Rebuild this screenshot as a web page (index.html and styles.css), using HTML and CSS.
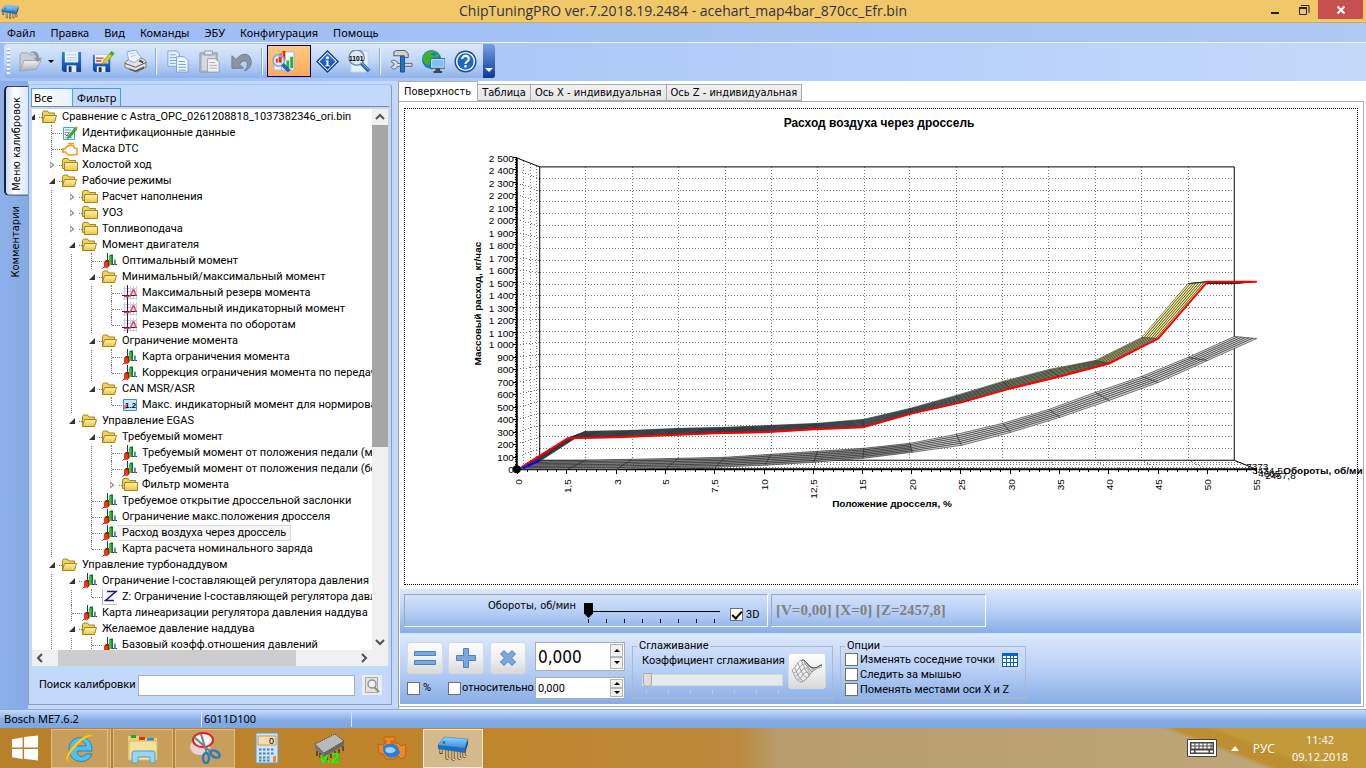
FILE: index.html
```
<!DOCTYPE html>
<html lang="ru">
<head>
    <meta charset="UTF-8">
    <meta name="viewport" content="width=device-width, initial-scale=1.0">
    <title>ChipTuningPRO</title>
    <link rel="stylesheet" href="styles.css">
</head>
<body>
    <!-- icon set -->
    <svg class="defs" aria-hidden="true">
        <defs>
            <linearGradient id="gFolder" x1="0" y1="0" x2="0" y2="1"><stop offset="0" stop-color="#fff6b0"/><stop offset="1" stop-color="#f0c33c"/></linearGradient>
            <linearGradient id="gBlue" x1="0" y1="0" x2="0" y2="1"><stop offset="0" stop-color="#2f86e0"/><stop offset="1" stop-color="#0a3f9c"/></linearGradient>
            <linearGradient id="gChip" x1="0" y1="0" x2="0" y2="1"><stop offset="0" stop-color="#8fd0ff"/><stop offset="1" stop-color="#3a92dc"/></linearGradient>
            <linearGradient id="gGray" x1="0" y1="0" x2="0" y2="1"><stop offset="0" stop-color="#f2f3f6"/><stop offset="1" stop-color="#a6adba"/></linearGradient>
        </defs>
        <symbol id="folder-open" viewBox="0 0 16 16">
            <path d="M.5 13V3.500l1-1.500h4l1.500 2h5.500v3" fill="#f3d25a" stroke="#a8821c"/>
            <path d="M.5 13.500L2.500 6.500h12l-2 7z" fill="url(#gFolder)" stroke="#a8821c"/>
        </symbol>
        <symbol id="folder" viewBox="0 0 16 16">
            <path d="M.5 11.500V3l1-1.500h4.500l1.500 2h6v8z" fill="#f3d25a" stroke="#a8821c"/>
            <path d="M2.500 5.500h13v8h-13z" fill="url(#gFolder)" stroke="#a8821c"/>
        </symbol>
        <symbol id="map3d" viewBox="0 0 16 16">
            <path d="M5.500 0v11L.5 15.500M5.500 11.500H15" stroke="#2b2f6e" fill="none"/>
            <path d="M2 9l2-2h4v5l-2 2.500H2z" fill="#b01208"/><path d="M2 9h4v5.500H2z" fill="#f0331c"/>
            <path d="M7 3l1.500-1.500H11V12H7z" fill="#0b7d1c"/><path d="M7 3h2.500v9H7z" fill="#35c83e"/>
            <path d="M12 6.500h1.800V12H12z" fill="#6a6fd0"/>
        </symbol>
        <symbol id="curve" viewBox="0 0 16 16">
            <path d="M2.500 1v14M8.500 1v14M11.500 1v14M14.500 1v14M1 3.500h14M1 6.500h14M1 13.500h14" stroke="#c9cbf5" fill="none"/>
            <path d="M5.500 0v16M0 10.500h15" stroke="#1c2060" fill="none"/>
            <path d="M2 11.500h5l2-1.500 2-5h1l2 6" stroke="#e8402c" fill="none" stroke-width="1.300"/>
        </symbol>
        <symbol id="doc-edit" viewBox="0 0 16 16">
            <path d="M1.500 2.500h11v12h-11z" fill="#e3f2ff" stroke="#4aa3e0"/>
            <path d="M3 5h6M3 7.500h5M3 12.500h7" stroke="#58aee8"/><path d="M3 9l2 2 2-3" stroke="#d83020" fill="none"/>
            <path d="M6 11.500L13 2.500l2 1.500-7 8.500-2.500 1z" fill="#39b52c" stroke="#1c7a18" stroke-width=".6"/><path d="M13 2.500l1-1.500 2 1.500-1 1.500z" fill="#e8a030"/>
        </symbol>
        <symbol id="engine" viewBox="0 0 16 16">
            <path d="M4.500 5.500h2V4.500h5v1l1.500 2h2v6h-2l-2 .500H6l-2.500-3H1v-3h2z" fill="none" stroke="#f2a01e" stroke-width="1.600"/>
            <path d="M6 2.500h6M9 2.500v2M1 7v5" stroke="#f2a01e" stroke-width="1.600"/>
        </symbol>
        <symbol id="num" viewBox="0 0 16 16">
            <path d="M1.500 2.500h13v11h-13z" fill="#c9e6fb" stroke="#3e8ed0"/>
            <path d="M2 9h3M2 11h3" stroke="#e02c20"/><text x="3" y="11" class="num-text">1.2</text>
        </symbol>
        <symbol id="zaxis" viewBox="0 0 16 16">
            <path d="M.5 0v15.500H15" stroke="#b9bcc8" fill="none"/>
            <path d="M5 2.500h9L3.500 11.500H12" stroke="#14149a" stroke-width="1.500" fill="none"/>
        </symbol>
        <symbol id="chip" viewBox="0 0 32 26">
            <path d="M4 12v7M10 15v8l2 1M16 16v8l2 1M22 16v7l2 1M27 14v7l2 1" stroke="#4c3a20" stroke-width="3" fill="none"/>
            <path d="M4 12v6M10 15v8l2 1M16 16v8l2 1M22 16v7l2 1M27 14v7l2 1" stroke="#ecd09a" stroke-width="1.500" fill="none"/>
            <path d="M1 10L7 2l24 2-3 9z" fill="url(#gChip)" stroke="#2878c0" stroke-width=".5"/><path d="M1 10l27 3v5L1 14z" fill="#1f70bc"/><path d="M28 13l3-9v5l-3 9z" fill="#154c86"/>
            <circle cx="7" cy="7.500" r="1.500" fill="#2470b4"/>
        </symbol>
        <symbol id="open" viewBox="0 0 24 24">
            <path d="M1 22V5l2-2h6l2 2h7v5" fill="#c9ced8" stroke="#9aa2b0"/><path d="M1 22l4-11h18l-5 9z" fill="url(#gGray)" stroke="#9aa2b0"/>
            <path d="M10 4c5-2 8 0 8 4h-3l5 5 4-5h-3c0-6-6-9-11-4z" fill="#8f97a5"/>
        </symbol>
        <symbol id="save" viewBox="0 0 24 24">
            <path d="M2 2h20v21H4l-2-2z" fill="url(#gBlue)"/><path d="M5 2h14v11H5z" fill="#eaf3fd"/>
            <path d="M7 5h10M7 8h10M7 10.500h10" stroke="#b7cce8"/><path d="M7 16h10v7H7z" fill="#e9edf3"/><path d="M9 17h3v6H9z" fill="#15336e"/>
        </symbol>
        <symbol id="save-edit" viewBox="0 0 24 24">
            <path d="M1 5h18v18H3l-2-2z" fill="url(#gBlue)"/><path d="M3 5h14v9H3z" fill="#f3f7fd"/>
            <path d="M4 8.500h8M4 11.500h6" stroke="#e03a28" stroke-width="1.500"/><path d="M5 17h9v6H5z" fill="#e9edf3"/><path d="M7 18h3v5H7z" fill="#15336e"/>
            <path d="M11 15l1-4 8-9 3 2-8 9z" fill="#f4c21e" stroke="#7a8a18" stroke-width=".7"/><path d="M18 4l3 2.500 2.500-3L20.500 1z" fill="#39b52c"/>
        </symbol>
        <symbol id="print" viewBox="0 0 24 24">
            <path d="M1 13l5-4h14l3 3v6l-10 5L1 18z" fill="#e2e2e2" stroke="#777"/>
            <path d="M5 11L3 2l9-2 6 8-7 5z" fill="#eef5ff" stroke="#7fa6e0"/><path d="M6 4l5-1M7 7l6-2" stroke="#a8c8f0"/>
            <path d="M1 14l11 4 11-5" stroke="#555" fill="none"/><path d="M5 19l7 2 9-4v2l-9 4-7-3z" fill="#555"/><path d="M16 11l4 2" stroke="#444" stroke-width="2"/>
        </symbol>
        <symbol id="copy" viewBox="0 0 24 24">
            <path d="M2 1h9l3 3v13H2z" fill="#e9f1fc" stroke="#7ba0d8"/><path d="M4 5h6M4 8h8M4 11h8M4 14h6" stroke="#7ba0d8"/>
            <path d="M11 7h8l4 4v12H11z" fill="#f4f8fe" stroke="#7ba0d8"/><path d="M13 12h7M13 15h8M13 18h8M13 21h8" stroke="#6f98d6"/>
        </symbol>
        <symbol id="paste" viewBox="0 0 24 24">
            <path d="M2 3h18v20H2z" fill="#b7bcc6" stroke="#9097a4"/><path d="M4 6h14v15H4z" fill="#d5d9e0"/><path d="M7 1h8v4H7z" fill="#e8eaee" stroke="#9097a4"/>
            <path d="M10 9h8l4 4v10H10z" fill="#f0f2f5" stroke="#9aa1ad"/><path d="M12 13h6M12 16h8M12 19h8" stroke="#a9afba"/>
        </symbol>
        <symbol id="undo" viewBox="0 0 24 24">
            <path d="M2 6v13h12l-4-4c4-6 9-4 8 2-.5 2-2 4-3 5 5-2 8-6 7-11C21 3 12 2 6.500 10z" fill="#8b94a3" stroke="#737c8b"/>
        </symbol>
        <symbol id="compare" viewBox="0 0 24 24">
            <path d="M2 5h13v16H2z" fill="#edf5ff" stroke="#8fb8e8"/><path d="M10 2h13v19H10z" fill="#f5faff" stroke="#8fb8e8"/>
            <path d="M7 4h3v9H7zM11 1h3v10h-3z" fill="#e2321e"/><path d="M15 11h3v8h-3zM19 7h3v12h-3z" fill="#27b339"/>
            <circle cx="7" cy="11" r="6" fill="#d5e9fb" fill-opacity=".7" stroke="#8aa4c0" stroke-width="1.500"/><path d="M4 13V9h2v4zM7 13V7h3v6z" fill="#e2321e"/><path d="M11 15l7 7" stroke="#2468c0" stroke-width="4"/>
        </symbol>
        <symbol id="info" viewBox="0 0 24 24">
            <path d="M12 0l12 12-12 12L0 12z" fill="#123c80"/><path d="M12 2l10 10-10 10L2 12z" fill="#fff"/><path d="M12 3.500l8.500 8.500-8.500 8.500L3.500 12z" fill="url(#gBlue)"/>
            <circle cx="12" cy="8" r="1.600" fill="#fff"/><path d="M10 11h3v5h1.500v1h-5v-1H11v-4h-1z" fill="#fff"/>
        </symbol>
        <symbol id="bits" viewBox="0 0 24 24">
            <path d="M3 1h18v22H3z" fill="#e6f1fd" stroke="#b8d0ee"/><circle cx="9" cy="8" r="8" fill="#dcebf9" stroke="#7d8999" stroke-width="1.500"/>
            <text x="1" y="11" class="bits-text">1101</text><path d="M14 14l8 8" stroke="#2468c0" stroke-width="4"/><path d="M14 13l8 8" stroke="#7db4ee"/>
        </symbol>
        <symbol id="tools" viewBox="0 0 24 24">
            <path d="M1 12l3 2v2l-3 2c2 3 6 2 7-1h15v-3H8c-1-4-5-4-7-2z" fill="#d8dbe0" stroke="#666"/>
            <path d="M11 6h4v17h-4z" fill="#2c74c8" stroke="#174a8c"/><path d="M4 2l3-1.500h9L19 4v4h-3l-1-2H9L4 6z" fill="#d0d4da" stroke="#555"/>
        </symbol>
        <symbol id="globe" viewBox="0 0 24 24">
            <circle cx="10" cy="10" r="10" fill="#1b78d0"/><path d="M3 4c4-4 11-5 15 1l-2 3-4-1-1 5-4 4-4-2-3-5z" fill="#38b52c"/><path d="M9 5l3-3 4 2-3 2z" fill="#1b78d0"/>
            <path d="M9 9h15v10H9z" fill="#cfe6fb" stroke="#34597f"/><path d="M10.500 10.500h12v7h-12z" fill="#7cc0f5"/><path d="M14 19h5v3h2v2h-9v-2h2z" fill="#3c4658"/>
        </symbol>
        <symbol id="help" viewBox="0 0 24 24">
            <circle cx="12" cy="12" r="11.500" fill="#1a4fa0"/><circle cx="12" cy="12" r="10" fill="#fff"/><circle cx="12" cy="12" r="8.500" fill="#1f68c8"/>
            <path d="M8.500 9.500c0-4.500 7-4.500 7 0 0 2.500-3.500 2.500-3.500 5" stroke="#fff" stroke-width="2.200" fill="none"/><circle cx="12" cy="17" r="1.400" fill="#fff"/>
        </symbol>
        <symbol id="lens" viewBox="0 0 16 16">
            <path d="M1.500.5h12v15h-12z" fill="#e4e4e4" stroke="#aaa"/><circle cx="8" cy="7" r="4" fill="#f2f2f2" stroke="#909090" stroke-width="1.500"/><path d="M10.500 10.500l4.500 4.500" stroke="#909090" stroke-width="2.200"/>
        </symbol>
        <symbol id="ie" viewBox="0 0 32 32">
            <path d="M28 19H13c0 6 7 7 9 3h6c-3 11-23 10-23-5C5 2 29 0 28 19zM13 14h9c-1-6-8-6-9 0z" fill="#4fc0f2" stroke="#1577b8" stroke-width=".8"/>
            <path d="M30 5c-2-6-14 0-21 9C1 23 0 31 6 30c-4-1-1-8 5-14C18 8 25 3 30 5z" fill="#f8cc2c" stroke="#d59a10" stroke-width=".6"/>
        </symbol>
        <symbol id="explorer" viewBox="0 0 32 32">
            <path d="M1 4h10l2 2h17v22H1z" fill="#efcf78"/><path d="M4 3h5v3H4z" fill="#18a838"/><path d="M12 5h6v3h-6z" fill="#d03828"/><path d="M20 6h7v3h-7z" fill="#2f8ee0"/>
            <path d="M2 9h28v19H2z" fill="#f6e29c" stroke="#dcb860"/><path d="M5 31V21q0-2 2-2h19q2 0 2 2v10h-5v-6H11v6z" fill="#9bd3f2" stroke="#4ba0d0"/>
        </symbol>
        <symbol id="scissors" viewBox="0 0 32 32">
            <ellipse cx="11" cy="15" rx="10" ry="8" fill="#ead4d0"/><ellipse cx="14" cy="8" rx="10" ry="7" fill="#f4f4f4" stroke="#e0202c" stroke-width="2"/>
            <path d="M5 5l18 16M12 2l6 20" stroke="#777f8a" stroke-width="2"/>
            <ellipse cx="17" cy="26" rx="3" ry="5" fill="none" stroke="#2a7cc0" stroke-width="2.500"/><ellipse cx="26" cy="22" rx="5" ry="3" fill="none" stroke="#2a7cc0" stroke-width="2.500" transform="rotate(30 26 22)"/>
        </symbol>
        <symbol id="calc" viewBox="0 0 24 32">
            <path d="M1 1h22v30H1z" fill="#cfe4f4" stroke="#5b9cc8"/><path d="M3 4h18v9H3z" fill="#f4dcae" stroke="#c79c5a"/><text x="14" y="12" class="calc-text">0</text>
            <path d="M4 17.500h16M4 21.500h16M4 25.500h12M4 28.500h12" stroke="#4f83b4" stroke-width="2.200" stroke-dasharray="2.500 1.500"/><path d="M18 24h3v6h-3z" fill="#f08a28"/>
        </symbol>
        <symbol id="chip-gray" viewBox="0 0 32 32">
            <path d="M2 12L22 2l9 7-20 12z" fill="#b9b9b9" stroke="#444" stroke-dasharray="1.500 1"/><path d="M2 12l9 9v4l-9-8z" fill="#777"/><path d="M11 21l20-12v4L11 25z" fill="#666"/>
            <path d="M4 19v5M7 21v5M14 24v4M18 22v4M22 19v4M26 17v4M30 14v5" stroke="#111"/><text x="7" y="31" class="ver-text">v.2</text>
        </symbol>
        <symbol id="turbo" viewBox="0 0 32 24">
            <path d="M9 1h11v4h-4v2h7l3 3 4-2 1 4-1 9-4 2-3-3-4 3H11l-3-5-4-1-1-9 4 1 4-2V5H9z" fill="#f08a1c" stroke="#c85a10"/>
            <path d="M8 10c5-3 12-3 15 1l2 6c-3 5-8 5-12 4-4-2-5-5-5-11z" fill="#2f7ce0"/><path d="M11 12c4-2 7-1 9 1s-2 4-5 4-6-2-4-5z" fill="#9cd0ff"/>
        </symbol>
    </svg>

    <header class="titlebar">
        <svg class="title-icon"><use href="#chip"/></svg>
        <h1>ChipTuningPRO ver.7.2018.19.2484 - acehart_map4bar_870cc_Efr.bin</h1>
        <div class="win-buttons">
            <button aria-label="Свернуть"><svg viewBox="0 0 12 12"><path d="M2 9h8" stroke="#222" stroke-width="2"/></svg></button>
            <button aria-label="Восстановить"><svg viewBox="0 0 12 12"><path d="M3 1.500h8V9M1.500 4h7v6.500h-7z" fill="none" stroke="#222"/><path d="M1 4h8" stroke="#222" stroke-width="2"/></svg></button>
            <button class="close" aria-label="Закрыть"><svg viewBox="0 0 12 12"><path d="M2.500 2.500l7 7M9.500 2.500l-7 7" stroke="#fff" stroke-width="2"/></svg></button>
        </div>
    </header>

    <nav class="menubar">
        <a href="#">Файл</a><a href="#">Правка</a><a href="#">Вид</a><a href="#">Команды</a><a href="#">ЭБУ</a><a href="#">Конфигурация</a><a href="#">Помощь</a>
    </nav>

    <div class="toolbar-row">
        <div class="toolbar">
            <span class="grip"></span>
            <button aria-label="Открыть"><svg><use href="#open"/></svg></button>
            <button class="drop" aria-label="Недавние файлы"><i></i></button>
            <button aria-label="Сохранить"><svg><use href="#save"/></svg></button>
            <button aria-label="Сохранить как"><svg><use href="#save-edit"/></svg></button>
            <button aria-label="Печать"><svg><use href="#print"/></svg></button>
            <span class="sep"></span>
            <button aria-label="Копировать"><svg><use href="#copy"/></svg></button>
            <button aria-label="Вставить"><svg><use href="#paste"/></svg></button>
            <button aria-label="Отменить"><svg><use href="#undo"/></svg></button>
            <span class="sep"></span>
            <button class="pressed" aria-label="Сравнение"><svg><use href="#compare"/></svg></button>
            <button aria-label="Информация"><svg><use href="#info"/></svg></button>
            <button aria-label="Просмотр данных"><svg><use href="#bits"/></svg></button>
            <span class="sep"></span>
            <button aria-label="Настройки"><svg><use href="#tools"/></svg></button>
            <button aria-label="Сеть"><svg><use href="#globe"/></svg></button>
            <button aria-label="Справка"><svg><use href="#help"/></svg></button>
            <button class="overflow" aria-label="Ещё"><i></i></button>
        </div>
    </div>

    <main class="workspace">
        <div class="side-tabs">
            <button class="active">Меню калибровок</button>
            <button>Комментарии</button>
        </div>

        <section class="nav-panel">
            <div class="nav-tabs">
                <button class="active">Все</button><button>Фильтр</button>
            </div>
            <div class="tree-box">
                <ul class="tree">
                    <li><div class="row"><button class="arrow open"></button><svg><use href="#folder-open"/></svg><span>Сравнение с Astra_OPC_0261208818_1037382346_ori.bin</span></div>
                        <ul class="more">
                            <li><div class="row"><svg><use href="#doc-edit"/></svg><span>Идентификационные данные</span></div></li>
                            <li><div class="row"><svg><use href="#engine"/></svg><span>Маска DTC</span></div></li>
                            <li><div class="row"><button class="arrow"></button><svg><use href="#folder"/></svg><span>Холостой ход</span></div></li>
                            <li><div class="row"><button class="arrow open"></button><svg><use href="#folder-open"/></svg><span>Рабочие режимы</span></div>
                                <ul>
                                    <li><div class="row"><button class="arrow"></button><svg><use href="#folder"/></svg><span>Расчет наполнения</span></div></li>
                                    <li><div class="row"><button class="arrow"></button><svg><use href="#folder"/></svg><span>УОЗ</span></div></li>
                                    <li><div class="row"><button class="arrow"></button><svg><use href="#folder"/></svg><span>Топливоподача</span></div></li>
                                    <li><div class="row"><button class="arrow open"></button><svg><use href="#folder-open"/></svg><span>Момент двигателя</span></div>
                                        <ul>
                                            <li><div class="row"><svg><use href="#map3d"/></svg><span>Оптимальный момент</span></div></li>
                                            <li><div class="row"><button class="arrow open"></button><svg><use href="#folder-open"/></svg><span>Минимальный/максимальный момент</span></div>
                                                <ul>
                                                    <li><div class="row"><svg><use href="#curve"/></svg><span>Максимальный резерв момента</span></div></li>
                                                    <li><div class="row"><svg><use href="#curve"/></svg><span>Максимальный индикаторный момент</span></div></li>
                                                    <li><div class="row"><svg><use href="#curve"/></svg><span>Резерв момента по оборотам</span></div></li>
                                                </ul>
                                            </li>
                                            <li><div class="row"><button class="arrow open"></button><svg><use href="#folder-open"/></svg><span>Ограничение момента</span></div>
                                                <ul>
                                                    <li><div class="row"><svg><use href="#map3d"/></svg><span>Карта ограничения момента</span></div></li>
                                                    <li><div class="row"><svg><use href="#map3d"/></svg><span>Коррекция ограничения момента по передачам</span></div></li>
                                                </ul>
                                            </li>
                                            <li><div class="row"><button class="arrow open"></button><svg><use href="#folder-open"/></svg><span>CAN MSR/ASR</span></div>
                                                <ul>
                                                    <li><div class="row"><svg><use href="#num"/></svg><span>Макс. индикаторный момент для нормирования</span></div></li>
                                                </ul>
                                            </li>
                                        </ul>
                                    </li>
                                    <li><div class="row"><button class="arrow open"></button><svg><use href="#folder-open"/></svg><span>Управление EGAS</span></div>
                                        <ul>
                                            <li><div class="row"><button class="arrow open"></button><svg><use href="#folder-open"/></svg><span>Требуемый момент</span></div>
                                                <ul>
                                                    <li><div class="row"><svg><use href="#map3d"/></svg><span>Требуемый момент от положения педали (малые)</span></div></li>
                                                    <li><div class="row"><svg><use href="#map3d"/></svg><span>Требуемый момент от положения педали (большие)</span></div></li>
                                                    <li><div class="row"><button class="arrow"></button><svg><use href="#folder"/></svg><span>Фильтр момента</span></div></li>
                                                </ul>
                                            </li>
                                            <li><div class="row"><svg><use href="#map3d"/></svg><span>Требуемое открытие дроссельной заслонки</span></div></li>
                                            <li><div class="row"><svg><use href="#map3d"/></svg><span>Ограничение макс.положения дросселя</span></div></li>
                                            <li><div class="row selected"><svg><use href="#map3d"/></svg><span>Расход воздуха через дроссель</span></div></li>
                                            <li><div class="row"><svg><use href="#map3d"/></svg><span>Карта расчета номинального заряда</span></div></li>
                                        </ul>
                                    </li>
                                </ul>
                            </li>
                            <li><div class="row"><button class="arrow open"></button><svg><use href="#folder-open"/></svg><span>Управление турбонаддувом</span></div>
                                <ul class="more">
                                    <li><div class="row"><button class="arrow open"></button><svg><use href="#map3d"/></svg><span>Ограничение I-составляющей регулятора давления</span></div>
                                        <ul>
                                            <li><div class="row"><svg><use href="#zaxis"/></svg><span>Z: Ограничение I-составляющей регулятора давления</span></div></li>
                                        </ul>
                                    </li>
                                    <li><div class="row"><svg><use href="#map3d"/></svg><span>Карта линеаризации регулятора давления наддува</span></div></li>
                                    <li><div class="row"><button class="arrow open"></button><svg><use href="#folder-open"/></svg><span>Желаемое давление наддува</span></div>
                                        <ul class="more">
                                            <li><div class="row"><svg><use href="#map3d"/></svg><span>Базовый коэфф.отношения давлений</span></div></li>
                                        </ul>
                                    </li>
                                </ul>
                            </li>
                        </ul>
                    </li>
                </ul>
                <div class="vscroll">
                    <svg viewBox="0 0 16 16"><path d="M4 10l4-4 4 4" /></svg><div class="thumb"></div><div class="rest"></div><svg viewBox="0 0 16 16"><path d="M4 6l4 4 4-4"/></svg>
                </div>
                <div class="hscroll">
                    <svg viewBox="0 0 16 16"><path d="M10 4L6 8l4 4"/></svg><div class="pad"></div><div class="thumb"></div><div class="rest"></div><svg viewBox="0 0 16 16"><path d="M6 4l4 4-4 4"/></svg>
                </div>
            </div>
            <div class="search">
                <label for="search">Поиск калибровки</label>
                <input type="text" id="search">
                <button aria-label="Найти"><svg><use href="#lens"/></svg></button>
            </div>
        </section>

        <section class="editor">
            <div class="tabs">
                <button class="active">Поверхность</button><button>Таблица</button><button>Ось X - индивидуальная</button><button>Ось Z - индивидуальная</button>
            </div>
            <div class="page">
                <div class="chart-box">
                    <svg id="chart" viewBox="0 0 954 478" preserveAspectRatio="xMinYMin slice"></svg>
                </div>

                <div class="strip rpm-strip">
                    <div class="sunken rpm">
                        <label for="rpm">Обороты, об/мин</label>
                        <div class="slider">
                            <input type="range" id="rpm" min="0" max="7" value="0">
                            <div class="ticks"><i></i><i></i><i></i><i></i><i></i><i></i><i></i><i></i></div>
                        </div>
                        <label class="check"><input type="checkbox" checked><span>3D</span></label>
                    </div>
                    <div class="sunken readout">[V=0,00] [X=0] [Z=2457,8]</div>
                </div>

                <div class="strip edit-strip">
                    <div class="ops">
                        <button aria-label="Присвоить"><svg viewBox="0 0 24 24"><path d="M1.500 5.500h21v4h-21zM1.500 14.500h21v4h-21z"/></svg></button>
                        <button aria-label="Прибавить"><svg viewBox="0 0 24 24"><path d="M9.500 2.500h5v7h7v5h-7v7h-5v-7h-7v-5h7z"/></svg></button>
                        <button aria-label="Умножить"><svg viewBox="0 0 24 24"><path d="M8 4.500l4 4 4-4L19.500 8l-4 4 4 4-3.500 3.500-4-4-4 4L4.500 16l4-4-4-4z"/></svg></button>
                        <div class="spin big"><input type="text" aria-label="Значение" value="0,000"><div><button aria-label="Больше"></button><button class="dn" aria-label="Меньше"></button></div></div>
                        <label class="check"><input type="checkbox"><span>%</span></label>
                        <label class="check wide"><input type="checkbox"><span>относительно</span></label>
                        <div class="spin"><input type="text" aria-label="Шаг" value="0,000"><div><button aria-label="Больше"></button><button class="dn" aria-label="Меньше"></button></div></div>
                    </div>
                    <fieldset class="smooth">
                        <legend>Сглаживание</legend>
                        <div class="smooth-left">
                            <label for="smooth">Коэффициент сглаживания</label>
                            <input type="range" id="smooth" min="0" max="6" value="0" disabled>
                            <div class="ticks"><i></i><i></i><i></i><i></i><i></i><i></i><i></i></div>
                        </div>
                        <button aria-label="Сгладить">
                            <svg viewBox="0 0 34 26"><path d="M2 12C6 10 8 2 12 2c5 0 6 8 12 8 4 0 5-3 8-3M2 12c2 5 5 12 9 12 7 0 8-13 21-15M4 15c5-2 6-9 10-9 4 0 5 7 9 7M6 18c5-2 6-9 10-8 3 1 3 5 5 6M8 22c4-2 5-8 9-8 2 0 2 3 2 5M5 10c2 5 4 11 8 13M8 5c2 6 5 13 9 15M11 2c2 6 5 12 9 15M14 3c2 5 5 9 8 11M17 5c2 4 5 7 8 7" fill="none" stroke="#8a8a8a" stroke-width=".8"/><path d="M12 2c5 0 6 8 12 8 4 0 5-3 8-3" fill="none" stroke="#444"/></svg>
                        </button>
                    </fieldset>
                    <fieldset class="options">
                        <legend>Опции</legend>
                        <div>
                            <label class="check"><input type="checkbox"><span>Изменять соседние точки</span></label>
                            <label class="check"><input type="checkbox"><span>Следить за мышью</span></label>
                            <label class="check"><input type="checkbox"><span>Поменять местами оси X и Z</span></label>
                        </div>
                        <button aria-label="Таблица"><svg viewBox="0 0 16 14"><path d="M0 0h16v14H0z" fill="#0a5fc8"/><path d="M1 3h3v2H1zM5 3h3v2H5zM9 3h2v2H9zM12 3h3v2h-3zM1 6h3v3H1zM5 6h3v3H5zM9 6h2v3H9zM12 6h3v3h-3zM1 10h3v3H1zM5 10h3v3H5zM9 10h2v3H9zM12 10h3v3h-3z" fill="#fff"/></svg></button>
                    </fieldset>
                </div>
            </div>
        </section>
    </main>

    <footer class="statusbar"><span>Bosch ME7.6.2</span><span>6011D100</span><span></span></footer>

    <div class="taskbar">
        <button class="start" aria-label="Пуск"><svg viewBox="0 0 28 26"><path d="M0 4l11-2v10.500H0zM12.500 1.700L27 0v12.500H12.500zM0 14h11v10.300L0 22.500zM12.500 14H27v12l-14.500-1.800z" fill="#fff"/></svg></button>
        <button class="task stacked" aria-label="Internet Explorer"><svg><use href="#ie"/></svg></button>
        <button class="task" aria-label="Проводник"><svg><use href="#explorer"/></svg></button>
        <button class="task" aria-label="Ножницы"><svg><use href="#scissors"/></svg></button>
        <button class="task pinned" aria-label="Калькулятор"><svg><use href="#calc"/></svg></button>
        <button class="task pinned" aria-label="Прошивка"><svg><use href="#chip-gray"/></svg></button>
        <button class="task pinned" aria-label="Двигатель"><svg><use href="#turbo"/></svg></button>
        <button class="task current" aria-label="ChipTuningPRO"><svg><use href="#chip"/></svg></button>
        <div class="tray">
            <svg class="kbd" viewBox="0 0 30 18"><path d="M.5.5h29v17H.5z" fill="#fff" stroke="#444"/><path d="M3 3h24v12H3z" fill="#444"/><path d="M4.500 5.500h21M4.500 8.500h21" stroke="#fff" stroke-width="2" stroke-dasharray="3 1"/><path d="M4 12.500h3M8.500 12.500h13M23 12.500h3" stroke="#fff" stroke-width="2"/></svg>
            <svg class="up" viewBox="0 0 8 5"><path d="M4 0l4 5H0z" fill="#fff"/></svg>
            <span class="lang">РУС</span>
            <time>11:42<br>09.12.2018</time>
        </div>
    </div>
    <script src="chart.js"></script>
</body>
</html>
```
FILE: styles.css
```
* {
    box-sizing: border-box;
}
body {
    margin: 0;
    height: 100vh;
    display: flex;
    flex-direction: column;
    overflow: hidden;
    font-family: Roboto, "Liberation Sans", sans-serif;
    font-size: 11px;
    line-height: 16px;
    color: #000;
    background: #9dbdf0;
}
button {
    font: inherit;
    color: inherit;
    padding: 0;
    border: none;
    background: none;
    cursor: pointer;
}
svg {
    display: block;
    flex: none;
}
.defs {
    position: absolute;
    width: 0;
    height: 0;
    visibility: hidden;
}
.num-text {
    font: bold 8px "Liberation Sans", sans-serif;
}
.bits-text {
    font: bold 7px "Liberation Sans", sans-serif;
}
.calc-text {
    font: 9px "Liberation Sans", sans-serif;
}
.ver-text {
    font: bold 15px "Liberation Sans", sans-serif;
    fill: #0f0;
}

/* window header */
.titlebar {
    flex: none;
    height: 23px;
    display: flex;
    align-items: flex-start;
    background: #f0c86a;
    border-bottom: 1px solid #c9ab63;
}
.title-icon {
    width: 18px;
    height: 15px;
    margin: 4px 140px 0 1px;
}
.titlebar h1 {
    flex: 1;
    margin: 0;
    text-align: center;
    font: 14px/22px "Open Sans", sans-serif;
    color: #333;
}
.win-buttons {
    display: flex;
    width: 102px;
    margin: 0 3px 0 54px;
}
.win-buttons button {
    flex: 1;
    height: 19px;
    display: flex;
    align-items: center;
    justify-content: center;
}
.win-buttons svg {
    width: 12px;
    height: 12px;
}
.win-buttons .close {
    flex: none;
    width: 45px;
    background: #c75050;
}
.menubar {
    flex: none;
    height: 20px;
    display: flex;
    gap: 15px;
    padding: 0 7px;
    background: linear-gradient(90deg, #9dbcf5, #aec9f4);
    border-bottom: 1px solid #eef4fd;
    font: 11px/20px "Noto Sans", sans-serif;
}
.menubar a {
    color: #000;
    text-decoration: none;
}
.toolbar-row {
    flex: none;
    height: 38px;
    padding: 1px 4px 3px;
    background: linear-gradient(90deg, #9dbef3, #bcd4fb 80%, #c4d9fa);
}
.toolbar {
    width: 491px;
    height: 34px;
    display: flex;
    align-items: center;
    background: linear-gradient(#dbe8fc, #c0d6f8 50%, #8fb2ea);
    border-radius: 3px;
}
.toolbar button {
    width: 32px;
    height: 32px;
    display: flex;
    align-items: center;
    justify-content: center;
}
.toolbar svg {
    width: 23px;
    height: 23px;
}
.grip {
    width: 3px;
    height: 26px;
    margin: 0 4px 0 3px;
    background: repeating-linear-gradient(#f4f8fe 0 2px, #8fa8d0 2px 3px, transparent 3px 4px);
}
.toolbar .drop {
    width: 9px;
}
.drop i {
    border: 3px solid transparent;
    border-top-color: #000;
    border-bottom: none;
}
.sep {
    width: 1px;
    height: 27px;
    margin: 0 4px 0 5px;
    background: #f0f5fd;
    box-shadow: -1px 0 #8caade;
}
.toolbar .pressed {
    width: 44px;
    border: 1px solid #000080;
    background: linear-gradient(#ffc982, #ffa95c);
    padding-right: 12px;
}
.toolbar .overflow {
    width: 12px;
    height: 34px;
    margin-left: auto;
    padding-top: 18px;
    background: linear-gradient(#78a0e8, #0a3a98);
    border-radius: 0 3px 3px 0;
}
.overflow i {
    border: 4px solid transparent;
    border-top-color: #fff;
    border-bottom: none;
}

/* calibration tree */
.workspace {
    flex: 1;
    min-height: 0;
    display: flex;
    background: #c3d9fb;
}
.side-tabs {
    width: 28px;
    display: flex;
    flex-direction: column;
    padding: 5px 0 0 4px;
    background: linear-gradient(90deg, #8db0ea, #86aae2);
}
.side-tabs button {
    width: 24px;
    writing-mode: vertical-rl;
    transform: rotate(180deg);
    padding: 4px 0 10px;
    font-family: "DejaVu Sans Condensed", sans-serif;
}
.side-tabs button + button {
    padding: 14px 0 10px;
}
.side-tabs .active {
    border: 1px solid #222;
    border-left: none;
    border-right-width: 2px;
    border-radius: 0 5px 5px 0;
    background: linear-gradient(90deg, #d8e6fb, #fff 60%, #c8dcf8);
}
.nav-panel {
    width: 364px;
    margin: 3px 0 4px;
    padding: 3px 2px 0;
    display: flex;
    flex-direction: column;
    border: 1px solid #8d9ab0;
    border-top-color: #a4c4f4;
    border-radius: 0 4px 0 0;
    background: #c3d9fb;
}
.nav-tabs {
    display: flex;
    align-items: flex-start;
    border-bottom: 1px solid #808894;
}
.nav-tabs button {
    height: 18px;
    padding: 0 4px;
    border: 1px solid #3e9bf4;
    border-bottom: none;
    background: #c3d9fb;
    font-family: "Noto Sans", sans-serif;
    line-height: 16px;
}
.nav-tabs .active {
    width: 42px;
    padding: 1px 3px 0 2px;
    text-align: left;
    border-color: #4aa3f8;
    background: linear-gradient(90deg, #fff, #e8f1fd);
}
.nav-tabs button + button {
    border-left: none;
}
.tree-box {
    flex: 1;
    min-height: 0;
    display: grid;
    grid-template: minmax(0, 1fr) 16px / minmax(0, 1fr) 16px;
    padding: 2px 1px 0;
}
.tree {
    overflow: hidden;
    background: #fff;
}
.tree, .tree ul {
    list-style: none;
    margin: 0;
    padding: 0;
}
.tree ul {
    padding-left: 20px;
}
.tree > li {
    margin-left: -10px;
}
.tree li {
    position: relative;
}
.tree ul > li::before {
    content: "";
    position: absolute;
    left: 9px;
    top: 0;
    bottom: 0;
    border-left: 1px dotted #777;
}
.tree ul:not(.more) > li:last-child::before {
    bottom: auto;
    height: 8px;
}
.row {
    position: relative;
    display: flex;
    align-items: center;
    height: 16px;
    padding-left: 20px;
    white-space: nowrap;
}
.row::before {
    content: "";
    position: absolute;
    left: 10px;
    top: 8px;
    width: 10px;
    border-top: 1px dotted #777;
}
.row svg {
    width: 16px;
    height: 16px;
}
.row span {
    padding: 0 4px;
}
.row.selected span {
    border: 1px solid #dcdcdc;
    border-left: none;
    background: #f6f6f6;
    line-height: 14px;
}
.row.selected svg {
    background: #f6f6f6;
}
.arrow {
    position: relative;
    flex: none;
    width: 12px;
    height: 16px;
    margin: 0 4px 0 -16px;
    background: #fff;
    display: flex;
    align-items: center;
    justify-content: center;
}
.arrow::before {
    content: "";
    width: 5px;
    height: 8px;
    background: #888;
    clip-path: path(evenodd, "M0 0L5 4L0 8ZM1 2L1 6L3 4Z");
}
.arrow.open::before {
    width: 6px;
    height: 6px;
    background: #333;
    clip-path: polygon(100% 0, 100% 100%, 0 100%);
}
.vscroll, .hscroll {
    display: flex;
    background: #f0f0f0;
}
.vscroll {
    flex-direction: column;
}
.hscroll {
    grid-column: 1 / 3;
    padding-right: 16px;
}
.vscroll svg, .hscroll svg {
    width: 16px;
    height: 16px;
    fill: none;
    stroke: #505050;
    stroke-width: 2;
}
.vscroll .thumb {
    flex: 322;
    background: #a6a6a6;
}
.vscroll .rest {
    flex: 187;
}
.hscroll .pad {
    flex: 10;
}
.hscroll .thumb {
    flex: 238;
    background: #cdcdcd;
}
.hscroll .rest {
    flex: 60;
}
.search {
    flex: none;
    height: 38px;
    display: flex;
    align-items: center;
    padding: 0 7px 0 8px;
}
.search label {
    width: 93px;
    white-space: nowrap;
}
.search input {
    flex: 1;
    min-width: 0;
    height: 21px;
    margin: 0 7px 0 6px;
    border: 1px solid #abadb3;
    background: #fff;
}
.search button {
    width: 20px;
    height: 20px;
    padding: 2px;
    background: #ececec;
}
.search svg {
    width: 16px;
    height: 16px;
}

/* editor */
.editor {
    flex: 1;
    min-width: 0;
    margin-left: 6px;
    padding: 0 2px 2px 0;
    display: flex;
    flex-direction: column;
    background: #fff;
    border-left: 1px solid #a0a0a0;
}
.tabs {
    flex: none;
    height: 20px;
    display: flex;
    align-items: flex-end;
}
.tabs button {
    height: 17px;
    padding: 0 4px;
    border: 1px solid #acacac;
    border-left: none;
    background: linear-gradient(#f2f2f2, #e5e5e5);
    font-family: "DejaVu Sans Condensed", sans-serif;
    line-height: 15px;
}
.tabs .active {
    height: 20px;
    padding: 0 6px 0 5px;
    border-bottom: none;
    background: #fff;
}
.page {
    flex: 1;
    min-height: 0;
    display: flex;
    flex-direction: column;
    padding: 0 2px 2px 1px;
    border: 1px solid #acacac;
    border-left: none;
    overflow: hidden;
}
.chart-box {
    flex: 1;
    min-height: 0;
    margin: 6px 3px 4px 4px;
    border: 1px dotted #000;
}
#chart {
    width: 100%;
    height: 100%;
    overflow: visible;
}
#chart text {
    font: 10px "Liberation Sans", sans-serif;
}
#chart .title {
    font: bold 12px "Liberation Sans", sans-serif;
}
#chart .axis {
    font: bold 10px "Liberation Sans", sans-serif;
}
#chart .grid {
    fill: none;
    stroke: #777;
    stroke-dasharray: 1 2;
}
#chart .frame {
    fill: none;
    stroke: #000;
}
.strip {
    flex: none;
    display: flex;
    background: linear-gradient(#dbe8fc, #b8d0f6 50%, #88ade6);
}
.rpm-strip {
    height: 44px;
    padding: 5px 4px 6px;
    gap: 3px;
}
.sunken {
    display: flex;
    align-items: center;
    border: 1px solid #a0a8b8;
    border-right-color: #fff;
    border-bottom-color: #fff;
}
.rpm {
    width: 364px;
    padding-left: 83px;
}
.rpm > label:first-child {
    align-self: flex-start;
    width: 89px;
    margin-top: 3px;
    white-space: nowrap;
    font-family: "DejaVu Sans Condensed", sans-serif;
}
.slider {
    width: 142px;
    margin: 4px 8px 0 3px;
}
.slider input, #smooth {
    appearance: none;
    display: block;
    width: 100%;
    margin: 0;
    background: none;
}
.slider input {
    height: 16px;
    background: linear-gradient(#000, #000) 8px 8px / 132px 1px no-repeat;
}
.slider input::-webkit-slider-thumb {
    appearance: none;
    width: 9px;
    height: 15px;
    margin-left: 4px;
    background: #000;
    clip-path: polygon(0 0, 100% 0, 100% 70%, 50% 100%, 0 70%);
}
.ticks {
    display: flex;
    justify-content: space-between;
}
.ticks i {
    width: 1px;
    height: 4px;
    background: #000;
}
.slider .ticks {
    padding: 0 7px 0 8px;
}
.check {
    display: flex;
    align-items: center;
    white-space: nowrap;
}
.check input {
    appearance: none;
    flex: none;
    width: 13px;
    height: 13px;
    margin: 0 3px 0 0;
    border: 1px solid #707070;
    background: #fff;
}
.check input:checked::before {
    content: "";
    display: block;
    width: 8px;
    height: 4px;
    margin: 2px 1px;
    border: solid #000;
    border-width: 0 0 2px 2px;
    transform: rotate(-48deg);
}
.rpm .check {
    margin-top: 8px;
}
.readout {
    width: 215px;
    padding-left: 4px;
    font: bold 15px "Liberation Serif", serif;
    color: #808080;
}
.edit-strip {
    height: 71px;
    padding: 6px 5px 4px 7px;
    gap: 7px;
    border-top: 1px solid #d4e3fa;
}
.ops {
    display: grid;
    grid-template-columns: 36px 37px 41px 89px;
    grid-template-rows: 32px 22px;
    gap: 3px 5px;
    padding-top: 2px;
}
.ops > button, .smooth button {
    width: 36px;
    height: 32px;
    display: flex;
    align-items: center;
    justify-content: center;
    border: 1px solid #d4d8e0;
    border-radius: 3px;
    background: linear-gradient(#fdfdfd, #f0f0f0 50%, #d9d9d9);
}
.ops > button svg {
    width: 24px;
    height: 24px;
    fill: #78a8dc;
    stroke: #4a82c4;
}
.ops .wide {
    grid-column: 2 / 4;
}
.wide input {
    margin-right: 1px;
}
.spin {
    display: flex;
    height: 22px;
    margin-left: -1px;
    padding: 1px;
    border: 1px solid #abadb3;
    background: #fff;
}
.spin.big {
    height: 29px;
}
.spin input {
    flex: 1;
    min-width: 0;
    padding: 0 1px;
    border: none;
    font: 11px Roboto, sans-serif;
}
.spin.big input {
    font: 17px "DejaVu Sans Condensed", sans-serif;
}
.spin div {
    width: 13px;
    display: flex;
    flex-direction: column;
}
.spin button {
    flex: 1;
    display: flex;
    align-items: center;
    justify-content: center;
    border: 1px solid #b4b4b4;
    background: #f0f0f0;
}
.spin button::before {
    content: "";
    border: 3px solid transparent;
    border-top: none;
    border-bottom-color: #000;
}
.spin .dn::before {
    border-top: 3px solid #000;
    border-bottom: none;
}
fieldset {
    min-width: 0;
    margin: 0;
    padding: 0;
    display: flex;
    border: 1px solid #b0b8c4;
    height: 59px;
}
legend {
    height: 12px;
    padding: 0 2px;
    margin-left: 4px;
    line-height: 11px;
}
.smooth {
    width: 201px;
}
.smooth-left {
    width: 141px;
    margin: 2px 5px 0 9px;
}
.smooth-left label {
    display: block;
    white-space: nowrap;
    line-height: 14px;
    margin-bottom: 6px;
}
#smooth {
    height: 12px;
    background: #e7eaea;
    border: 1px solid #d6d6d6;
}
#smooth::-webkit-slider-thumb {
    appearance: none;
    width: 9px;
    height: 14px;
    background: #ddd;
    border: 1px solid #aaa;
    border-radius: 0 0 4px 4px;
}
.smooth .ticks {
    padding: 4px 4px 0;
}
.smooth .ticks i {
    background: #c4cad4;
}
.smooth button {
    width: 38px;
    height: 36px;
    margin-top: 1px;
}
.smooth button svg {
    width: 34px;
    height: 26px;
}
.options {
    width: 186px;
}
.options > div {
    width: 158px;
    padding-left: 4px;
}
.options .check {
    height: 15px;
}
.options .check input {
    margin-right: 2px;
}
.options button {
    width: 22px;
    height: 20px;
    margin: -2px 0 0;
    padding: 3px;
    background: #c4daf8;
}
.options button svg {
    width: 16px;
    height: 14px;
}

/* status line and task bar */
.statusbar {
    flex: none;
    height: 19px;
    display: flex;
    align-items: center;
    background: linear-gradient(#c6dafa, #83aae4 60%, #7ea6e0);
    border-top: 1px solid #88ade6;
    font: 11px/16px "Noto Sans", sans-serif;
}
.statusbar span {
    width: 150px;
    height: 15px;
    padding-left: 2px;
    border-right: 1px solid #dce8fb;
    line-height: 14px;
}
.statusbar span:first-child {
    width: 202px;
    padding-left: 4px;
}
.statusbar span:last-child {
    border: none;
}
.taskbar {
    flex: none;
    height: 40px;
    display: flex;
    align-items: center;
    background: linear-gradient(21deg, transparent 0 86%, #bd8f30 87% 89%, #c29a3a 90%), linear-gradient(90deg, #b8802a, #bf862c 36%, #bc8a3e 54%, #b89c6c 57%, #bfa87c);
}
.start {
    width: 51px;
    padding-left: 12px;
}
.start svg {
    width: 27px;
    height: 26px;
}
.task {
    width: 60px;
    height: 39px;
    margin-right: 2px;
    display: flex;
    align-items: center;
    justify-content: center;
    border: 1px solid #dcbc88;
    background: #c79e5c;
}
.task svg {
    width: 32px;
    height: 32px;
}
.stacked {
    border-right: 4px double #dcbc88;
}
.task.pinned {
    background: none;
    border-color: transparent;
}
.task.current {
    border-color: #f6ead4;
    background: #d4b98c;
}
.tray {
    margin-left: auto;
    display: flex;
    align-items: center;
    padding-right: 18px;
    color: #fff;
    font: 12px/17px "Open Sans", sans-serif;
}
.kbd {
    width: 30px;
    height: 18px;
    margin-right: 14px;
}
.up {
    width: 8px;
    height: 5px;
    margin-right: 14px;
}
.lang {
    margin-right: 17px;
}
.tray time {
    text-align: center;
    font-size: 11px;
}
```
FILE: chart.js
```
const chart = document.getElementById("chart");
const NS = "http://www.w3.org/2000/svg";

function add(tag, attrs, text) {
    const el = document.createElementNS(NS, tag);
    for (const key in attrs) el.setAttribute(key, attrs[key]);
    if (text !== undefined) el.textContent = text;
    chart.appendChild(el);
}

function line(x1, y1, x2, y2, cls) {
    add("path", { d: `M${x1} ${y1}L${x2} ${y2}`, class: cls, "shape-rendering": "crispEdges" });
}

// front and back planes of the box
const front = { x: 112, y: 361, dx: 49.35, dy: 12.5 };
const back = { x: 135, y: 352, dx: 46.4, dy: 11.76, right: 831, top: 58 };
const xLabels = ["0", "1,5", "3", "5", "7,5", "10", "12,5", "15", "20", "25", "30", "35", "40", "45", "50", "55"];

function grid() {
    for (let i = 1; i <= 25; i++) {
        const yb = Math.round(back.y - i * back.dy);
        const yf = Math.round(front.y - i * front.dy);
        if (i < 25) {
            line(back.x, yb, back.right, yb, "grid");
            line(front.x, yf, back.x, yb, "grid");
        }
    }
    for (let i = 1; i < 15; i++) {
        const xb = Math.round(back.x + i * back.dx);
        line(xb, back.top, xb, back.y, "grid");
        line(xb, back.y, Math.round(113 + i * front.dx), front.y, "grid");
    }
    [[119, 52, 359], [126, 55, 356], [132, 57, 354]].forEach(z => {
        line(z[0], z[1], z[0], z[2], "grid");
        line(z[0], z[2], 850 - (z[0] - 112) / 2, z[2], "grid");
    });
    add("path", { d: "M112 49L135 58H831V352H135V58M831 352L853 361", class: "frame" });
}

function axes() {
    add("path", { d: "M112 49V361H853", fill: "none", stroke: "#000", "stroke-width": 2 });
    for (let i = 0; i <= 25; i++) {
        const y = Math.round(front.y - i * front.dy);
        line(108, y, 112, y, "frame");
        const label = String(i * 100).replace(/(\d)(\d{3})$/, "$1 $2");
        add("text", { x: 109, y: y + 4, "text-anchor": "end" }, label);
    }
    for (let i = 0; i < 125; i++) line(110, 361 - i * 2.5, 112, 361 - i * 2.5, "frame");
    for (let i = 0; i <= 75; i++) {
        const x = Math.round(113 + i * front.dx / 5);
        line(x, 361, x, i % 5 ? 364 : 366, "frame");
    }
    xLabels.forEach((label, i) => {
        const x = Math.round(117 + i * front.dx);
        add("text", { transform: `translate(${x} 371) rotate(-90)`, "text-anchor": "end" }, label);
    });
}

function surface(f, b, strips, colour, stroke) {
    const at = (i, t) => [f[i][0] + (b[i][0] - f[i][0]) * t, f[i][1] + (b[i][1] - f[i][1]) * t];
    for (let s = strips; s > 0; s--) {
        for (let i = 0; i < f.length - 1; i++) {
            const pts = [at(i, s / strips), at(i + 1, s / strips), at(i + 1, (s - 1) / strips), at(i, (s - 1) / strips)];
            add("polygon", { points: pts.join(" "), fill: colour(i), stroke: stroke, "stroke-width": 0.6 });
        }
    }
}

const frontX = i => 114 + i * 49.3;
const backX = i => back.x + i * back.dx;
const points = (ys, fx) => ys.map((y, i) => [fx(i), y]);

const baseFront = points([361, 361, 361, 360, 359, 357, 354, 350, 344, 337, 324, 309, 292, 274, 252, 230], frontX);
const baseBack = points([353, 352, 351, 350, 349, 346, 343, 340, 335, 326, 315, 301, 284, 268, 249, 228], backX);
const mapFront = points([360, 330, 329, 327, 325, 324, 321, 319, 305, 294, 280, 268, 255, 230, 173, 173], frontX);
const mapBack = points([353, 323, 322, 320, 319, 317, 315, 311, 300, 287, 273, 261, 252, 229, 175, 175], backX);
const tint = ["#5a5a86", "#566070", "#5b6a78", "#5b6a78", "#5b6a78", "#5f7480", "#6a8088", "#7a9698", "#8aa09a", "#92a280", "#a0ae74", "#b4bc70", "#dcdc7c", "#f6f08e", "#222"];

grid();
axes();
surface(baseFront, baseBack, 6, i => i < 8 ? "#9a9a9a" : "#dadada", "#222");
surface(mapFront, mapBack, 7, i => tint[i], "#23272a");
add("polyline", { points: mapFront.join(" ").replace("114,360", "118,358"), fill: "none", stroke: "#f00", "stroke-width": 2 });
add("path", { d: "M118 360L135 352", stroke: "#00f", "stroke-width": 2 });
add("circle", { cx: 112, cy: 361, r: 4 });

add("text", { x: 475, y: 18, "text-anchor": "middle", class: "title" }, "Расход воздуха через дроссель");
add("text", { x: 488, y: 399, "text-anchor": "middle", class: "axis" }, "Положение дросселя, %");
add("text", { transform: "translate(76 195) rotate(-90)", "text-anchor": "middle", class: "axis" }, "Массовый расход, кг/час");
add("text", { x: 843, y: 362 }, "7373");
add("text", { x: 849, y: 366 }, "3434,5");
add("text", { x: 855, y: 369 }, "4665");
add("text", { x: 862, y: 371 }, "2457,8");
add("text", { x: 880, y: 366, class: "axis" }, "Обороты, об/мин");
```
